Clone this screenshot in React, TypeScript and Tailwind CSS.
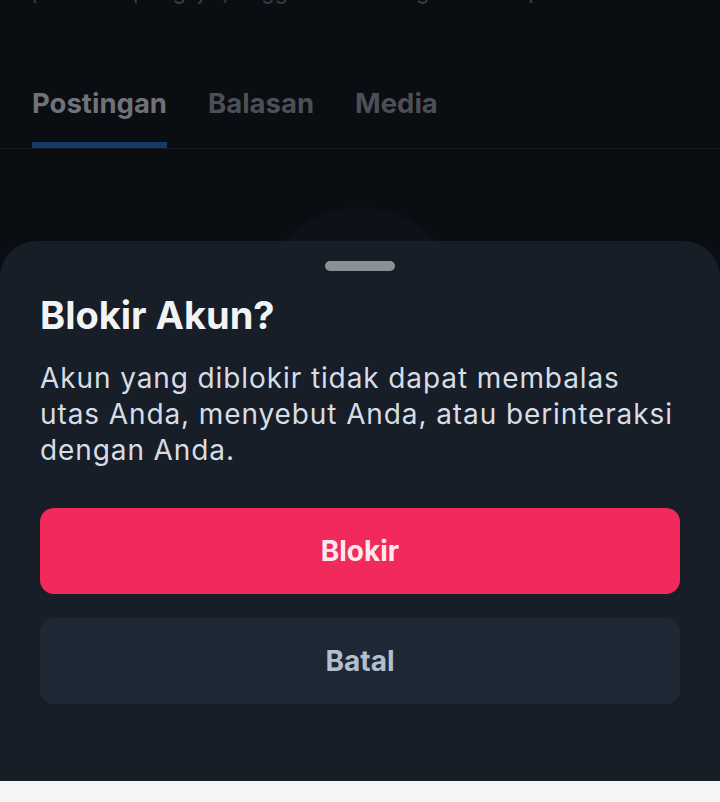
const inter = { fontFamily: "Inter, 'Noto Sans', sans-serif" };

function Tab({ label, active }: { label: string; active?: boolean }) {
  return (
    <div className="flex flex-col">
      <span
        className={
          "text-[27.5px] font-bold leading-[28px] " +
          (active ? "text-[#6f7378]" : "text-[#4c5056]")
        }
      >
        {label}
      </span>
      <span className={"mt-[25px] h-[6px] " + (active ? "bg-[#163a66]" : "bg-transparent")} />
    </div>
  );
}

export default function App() {
  return (
    <div className="flex h-[802px] flex-col overflow-hidden bg-[#0a0d12]" style={inter}>
      <div className="h-[241px] shrink-0 overflow-hidden">
        <p className="mt-[-23px] whitespace-nowrap px-8 text-[22px] leading-[28px] text-[#3a3f46]">
          penulis &amp; pengajar, tinggal di Bandung · suka kopi dan buku
        </p>
        <div className="mt-[84px] flex gap-[41px] px-8">
          <Tab label="Postingan" active />
          <Tab label="Balasan" />
          <Tab label="Media" />
        </div>
        <div className="h-px bg-[#141920]" />
        <div className="mt-[58px] flex justify-center">
          <div className="h-[204px] w-[204px] rounded-full bg-[#0d121a]" />
        </div>
      </div>

      <section className="flex flex-1 flex-col rounded-t-[36px] bg-[#171e28] px-10 pt-5">
        <div className="mx-auto h-[10px] w-[70px] rounded-full bg-[#8b9096]" />
        <h2 className="mt-[22px] text-[38px] font-bold leading-[44px] text-[#f1f3f5]">
          Blokir Akun?
        </h2>
        <p className="mt-[23px] text-[28px] leading-[36px] tracking-[0.9px] text-[#d6dde5]">
          Akun yang diblokir tidak dapat membalas
          <br />
          utas Anda, menyebut Anda, atau berinteraksi
          <br />
          dengan Anda.
        </p>
        <button className="mt-[40px] flex h-[86px] items-center justify-center rounded-[14px] bg-[#f2295b] text-[28px] font-bold text-[#fde8f0]">
          Blokir
        </button>
        <button className="mt-6 flex h-[86px] items-center justify-center rounded-[14px] bg-[#1e2834] text-[28px] font-bold text-[#b2bfcd]">
          Batal
        </button>
      </section>

      <div className="h-[21px] shrink-0 bg-[#f5f5f5]" />
    </div>
  );
}
